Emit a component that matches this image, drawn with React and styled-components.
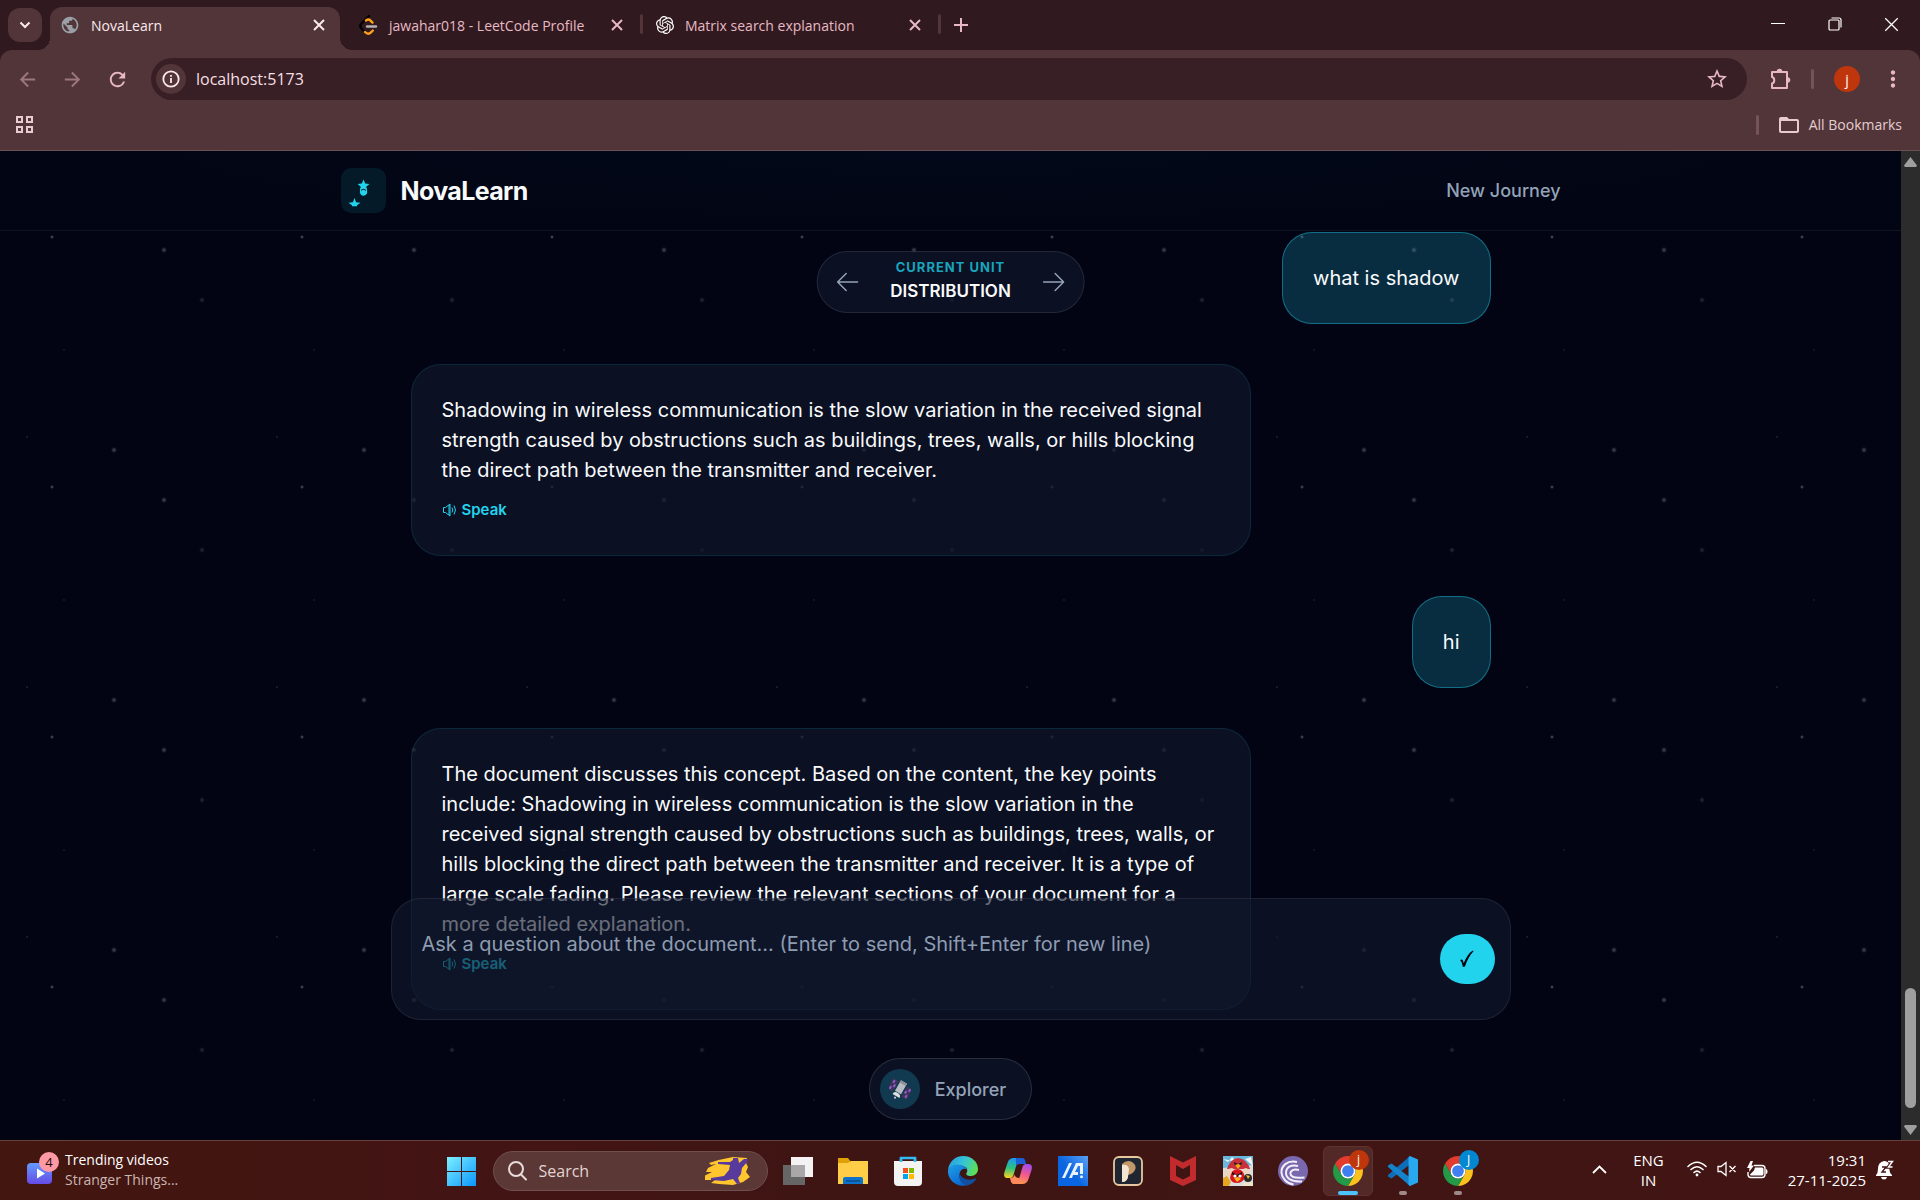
import { useState } from "react";
import styled, { createGlobalStyle, css } from "styled-components";
import { MdPublic, MdArrowBack, MdArrowForward, MdRefresh, MdStarOutline, MdFolderOpen, MdMoreVert } from "react-icons/md";
import { SiOpenai } from "react-icons/si";

const uiFont = '"Segoe UI", "Open Sans", "Noto Sans", sans-serif';

const GlobalStyle = createGlobalStyle`
  * {
    box-sizing: border-box;
  }
  body {
    margin: 0;
    background: #020414;
    font-family: Inter, sans-serif;
  }
  button {
    font: inherit;
    color: inherit;
    background: none;
    border: none;
    padding: 0;
    cursor: pointer;
  }
  svg {
    display: block;
    flex-shrink: 0;
  }
`;

const Desktop = styled.div`
  height: 100vh;
  display: flex;
  flex-direction: column;
  overflow: hidden;
`;

/* ---------- browser chrome ---------- */

const TabStrip = styled.div`
  display: flex;
  height: 50px;
  padding-left: 8px;
  background: #30191f;
  color: #e8b9c4;
  font-family: ${uiFont};
  font-size: 14px;
`;

const TabSearch = styled.button`
  width: 34px;
  height: 34px;
  margin: 8px 8px 0 0;
  border-radius: 12px;
  background: #513539;
  color: #fbe9ec;
  display: grid;
  place-items: center;
`;

const TabBox = styled.div`
  position: relative;
  display: flex;
  align-items: center;
  width: 290px;
  height: 43px;
  margin: 7px 8px 0 0;
  padding: 0 15px 7px 10px;
  border-radius: 12px 12px 0 0;

  ${({ $active }) => $active && css`
    background: #513539;
    color: #fbe9ec;

    &::before,
    &::after {
      content: "";
      position: absolute;
      bottom: 0;
      width: 12px;
      height: 12px;
    }
    &::before {
      left: -12px;
      background: radial-gradient(circle at 0 0, transparent 12px, #513539 12px);
    }
    &::after {
      right: -12px;
      background: radial-gradient(circle at 100% 0, transparent 12px, #513539 12px);
    }
  `}

  ${({ $divided }) => $divided && css`
    &::after {
      content: "";
      position: absolute;
      right: -5px;
      top: 7px;
      width: 3px;
      height: 20px;
      border-radius: 2px;
      background: #513539;
    }
  `}
`;

const TabTitle = styled.span`
  flex: 1;
  padding-left: 11px;
  white-space: nowrap;
`;

const TabClose = styled.button`
  width: 12px;
  height: 12px;
`;

const NewTab = styled.button`
  width: 34px;
  height: 36px;
  margin-top: 7px;
  display: grid;
  place-items: center;
`;

const WindowControls = styled.div`
  display: flex;
  margin-left: auto;
  color: #fff;
`;

const WindowButton = styled.button`
  width: 57px;
  height: 48px;
  display: grid;
  place-items: center;
`;

const ToolArea = styled.div`
  background: #30191f;
`;

const Toolbar = styled.div`
  display: flex;
  align-items: center;
  height: 58px;
  padding: 0 14px 0 16px;
  border-radius: 12px 12px 0 0;
  background: #513539;
  color: #e8b9c4;
`;

const NavButton = styled.button`
  width: 24px;
  height: 24px;
  margin-right: 21px;
  opacity: ${({ disabled }) => (disabled ? 0.5 : 1)};
`;

const AddressBar = styled.label`
  flex: 1;
  display: flex;
  align-items: center;
  height: 42px;
  margin-right: 22px;
  padding: 0 18px 0 5px;
  border-radius: 21px;
  background: #381f25;
`;

const SiteInfo = styled.span`
  width: 30px;
  height: 30px;
  border-radius: 50%;
  background: #513539;
  color: #fbe9ec;
  display: grid;
  place-items: center;
`;

const AddressInput = styled.input`
  flex: 1;
  margin-left: 8px;
  padding: 0 2px;
  border: none;
  outline: none;
  background: none;
  color: #f5dfe3;
  font: 16px ${uiFont};
`;

const Divider = styled.span`
  width: 3px;
  height: 20px;
  border-radius: 2px;
  background: #74545a;
`;

const ToolDivider = styled(Divider)`
  margin-left: 20px;
`;

const Profile = styled.button`
  width: 26px;
  height: 26px;
  margin: 0 20px;
  border-radius: 50%;
  background: #bf360c;
  color: #fff;
  font: 14px ${uiFont};
`;

const Bookmarks = styled.div`
  display: flex;
  align-items: center;
  justify-content: space-between;
  height: 43px;
  padding: 0 18px 9px 15px;
  background: #513539;
  border-bottom: 1px solid #6b5052;
  color: #e6ccd0;
  font: 14px ${uiFont};
`;

const BookmarkEnd = styled.div`
  display: flex;
  align-items: center;
  gap: 18px;
`;

const AllBookmarks = styled.button`
  display: flex;
  align-items: center;
  gap: 8px;
`;

/* ---------- page ---------- */

const Viewport = styled.div`
  flex: 1;
  min-height: 0;
  display: flex;
`;

const Page = styled.div`
  position: relative;
  flex: 1;
  min-width: 0;
  overflow: hidden;
  background-color: #020414;
  background-image:
    radial-gradient(1px 1px at 27px 36px, rgba(238, 238, 238, 0.3), transparent),
    radial-gradient(2px 2px at 52px 86px, rgba(255, 255, 255, 0.35), transparent),
    radial-gradient(1px 1px at 64px 199px, rgba(221, 221, 221, 0.25), transparent),
    radial-gradient(3px 3px at 114px 49px, rgba(255, 255, 255, 0.28), transparent),
    radial-gradient(3px 3px at 164px 99px, rgba(255, 255, 255, 0.28), transparent),
    radial-gradient(3px 3px at 202px 149px, rgba(221, 221, 221, 0.18), transparent);
  background-size: 250px 250px;
`;

const Header = styled.header`
  position: relative;
  height: 80px;
  background: radial-gradient(ellipse at 50% 0, #03091a, #020514 60%);
  border-bottom: 1px solid #11131f;
`;

const HeaderInner = styled.div`
  display: flex;
  align-items: center;
  justify-content: space-between;
  max-width: 1280px;
  height: 100%;
  margin: 0 auto;
  padding: 0 30px;
`;

const Brand = styled.a`
  display: flex;
  align-items: center;
  gap: 15px;
  color: #f8fafc;
  font-size: 25px;
  font-weight: 700;
  letter-spacing: -0.025em;
  text-decoration: none;
`;

const LogoBox = styled.span`
  width: 45px;
  height: 45px;
  border-radius: 10px;
  background: #051a28;
`;

const NewJourney = styled.button`
  color: #94a3b8;
  font-size: 18px;
  font-weight: 500;
`;

const UnitNav = styled.nav`
  position: absolute;
  top: 100px;
  left: 50%;
  transform: translateX(-50%);
  display: flex;
  align-items: center;
  gap: 28px;
  padding: 8px 15px;
  border: 1px solid rgba(255, 255, 255, 0.1);
  border-radius: 31px;
  background: rgba(17, 24, 44, 0.62);
  color: #94a3b8;
`;

const UnitButton = styled.button`
  width: 30px;
  height: 30px;
  display: grid;
  place-items: center;
`;

const UnitText = styled.div`
  display: flex;
  flex-direction: column;
  align-items: center;
  gap: 4px;
  white-space: nowrap;
`;

const UnitLabel = styled.div`
  color: #18a5bd;
  font-size: 13px;
  font-weight: 700;
  line-height: 15px;
  letter-spacing: 1px;
`;

const UnitName = styled.div`
  color: #f8fafc;
  font-size: 17px;
  font-weight: 600;
  line-height: 25px;
`;

const Feed = styled.main`
  display: flex;
  flex-direction: column;
  gap: 40px;
  max-width: 1080px;
  margin: 0 auto;
  padding-top: 1px;
`;

const Bubble = styled.article`
  max-width: 840px;
  padding: 30px;
  border-radius: 30px;
  color: #f8fafc;
  font-size: 20px;
  font-weight: 400;
  line-height: 30px;
  align-self: ${({ $mine }) => ($mine ? "flex-end" : "flex-start")};
  background: ${({ $mine }) => ($mine ? "rgba(42, 211, 238, 0.2)" : "rgba(17, 24, 44, 0.62)")};
  border: 1px solid ${({ $mine }) => ($mine ? "rgba(34, 211, 238, 0.4)" : "rgba(34, 211, 238, 0.12)")};
`;

const Speak = styled.button`
  display: flex;
  align-items: center;
  gap: 5px;
  height: 30px;
  margin-top: 10px;
  color: #22d3ee;
  font-size: 15px;
  font-weight: 600;
`;

const Dock = styled.div`
  position: absolute;
  left: 0;
  right: 0;
  bottom: 20px;
  display: flex;
  flex-direction: column;
  align-items: center;
  gap: 38px;
`;

const Composer = styled.form`
  display: flex;
  align-items: center;
  width: 100%;
  max-width: 1120px;
  padding: 15px;
  border: 1px solid rgba(255, 255, 255, 0.08);
  border-radius: 30px;
  background: rgba(17, 24, 44, 0.62);
`;

const Question = styled.textarea`
  flex: 1;
  display: block;
  height: 90px;
  padding: 15px;
  border: none;
  outline: none;
  resize: none;
  background: none;
  color: #f8fafc;
  font: 400 20px/30px Inter, sans-serif;

  &::placeholder {
    color: #8d9cb1;
    opacity: 1;
  }
`;

const Send = styled.button`
  width: 55px;
  height: 50px;
  border-radius: 25px;
  background: #22d3ee;
  color: #020414;
  display: grid;
  place-items: center;
`;

const ExplorerPill = styled.button`
  display: flex;
  align-items: center;
  gap: 15px;
  padding: 10px 25px 10px 10px;
  border: 1px solid rgba(255, 255, 255, 0.12);
  border-radius: 31px;
  background: #0b1122;
  color: #94a3b8;
  font-size: 18px;
  font-weight: 500;
`;

const ExplorerIcon = styled.span`
  width: 40px;
  height: 40px;
  border-radius: 50%;
  background: #113a50;
  display: grid;
  place-items: center;
`;

const ScrollBar = styled.div`
  width: 19px;
  padding: 6px 0 5px;
  background: #2c2c2c;
  display: flex;
  flex-direction: column;
  align-items: center;
`;

const ScrollThumb = styled.span`
  width: 11px;
  height: 120px;
  margin: auto 0 17px;
  border-radius: 6px;
  background: #9f9f9f;
`;

/* ---------- taskbar ---------- */

const Taskbar = styled.footer`
  display: flex;
  align-items: center;
  height: 60px;
  border-top: 1px solid #66403a;
  background: linear-gradient(90deg, #43160f, #431414 25%, #3e1513 45%, #421513);
  color: #fff;
  font: 14px/20px ${uiFont};
`;

const TaskSide = styled.div`
  flex: 1 1 0;
  display: flex;
  align-items: center;
  padding-bottom: 2px;
  white-space: nowrap;
`;

const Widget = styled.button`
  display: flex;
  align-items: center;
  gap: 4px;
  margin-left: 25px;
  text-align: left;
`;

const WidgetSub = styled.span`
  display: block;
  color: #cbb5b3;
`;

const TaskCenter = styled.div`
  display: flex;
  align-items: center;
  gap: 5px;
  margin-right: 2px;
`;

const SearchBox = styled.label`
  display: flex;
  align-items: center;
  width: 275px;
  height: 40px;
  margin-left: 2px;
  padding: 0 16px 0 14px;
  border: 1px solid #70504c;
  border-radius: 20px;
  background: #5b3735;
`;

const SearchInput = styled.input`
  flex: 1;
  min-width: 0;
  margin-left: 10px;
  padding: 0 2px;
  border: none;
  outline: none;
  background: none;
  font: 16px ${uiFont};

  &::placeholder {
    color: #e2d5d4;
    opacity: 1;
  }
`;

const TaskButton = styled.button`
  position: relative;
  width: 50px;
  height: 50px;
  border-radius: 6px;
  display: grid;
  place-items: center;
  border: 1px solid ${({ $active }) => ($active ? "#5c3331" : "transparent")};
  background: ${({ $active }) => ($active ? "#532927" : "none")};

  &::after {
    content: "";
    position: absolute;
    bottom: 0;
    height: 4px;
    border-radius: 2px;
    width: ${({ $active }) => ($active ? "20px" : "8px")};
    background: ${({ $active, $running }) => ($active ? "#4cc2ff" : $running ? "#a08a88" : "none")};
  }
`;

const ProfileBadge = styled.span`
  position: absolute;
  top: 3px;
  right: 3px;
  width: 20px;
  height: 20px;
  border-radius: 50%;
  background: ${({ $color }) => $color};
  color: #fff;
  font-size: 12px;
  line-height: 20px;
`;

const Tray = styled.div`
  display: flex;
  align-items: center;
  margin: 0 26px 0 auto;
  font-size: 15px;
`;

const Language = styled.button`
  margin: 0 23px 0 26px;
  text-align: center;
`;

const TrayIcons = styled.button`
  display: flex;
  gap: 10px;
`;

const Clock = styled.button`
  display: flex;
  align-items: center;
  gap: 10px;
  margin-left: 20px;
  text-align: right;
`;

/* ---------- drawings ---------- */

const CrossIcon = ({ size = 12, stroke = 2 }) => (
  <svg width={size} height={size} viewBox="0 0 12 12" fill="none" stroke="currentColor" strokeWidth={stroke}>
    <path d="M1 1l10 10M11 1L1 11" />
  </svg>
);

const LeetCodeIcon = () => (
  <svg width="20" height="20" viewBox="0 0 20 20" fill="none" strokeWidth="2.4" strokeLinecap="round">
    <path d="M11 1L3.500 8.500c-1.500 1.600-1.500 3.400 0 5l3 3.300" stroke="#000" />
    <path d="M8 5.500c1.500-1.200 3.200-1.200 4.500.1l2 2" stroke="#ffa116" />
    <path d="M7 17c2 2 4.300 2 6 .3l1.800-1.800" stroke="#ffa116" />
    <path d="M9 11.500h9" stroke="#b3b3b3" />
  </svg>
);

const InfoIcon = () => (
  <svg width="18" height="18" viewBox="0 0 18 18" fill="none" stroke="currentColor" strokeWidth="1.800">
    <circle cx="9" cy="9" r="7.700" />
    <path d="M9 8v5M9 5v1.800" />
  </svg>
);

const PuzzleIcon = () => (
  <svg width="22" height="22" viewBox="0 0 22 22" fill="none" stroke="currentColor" strokeWidth="2" strokeLinejoin="round">
    <path d="M3 4h15v16H3v-4.500c3-.5 3-6 0-6.500z" />
    <path d="M8 4a2.500 2.500 0 0 1 5 0zM18 9.500a2.500 2.500 0 0 1 0 5z" fill="currentColor" stroke="none" />
    <path d="M8.500 3.500a2 2 0 0 1 4 0M18.500 10a2 2 0 0 1 0 4" strokeWidth="1.500" />
  </svg>
);

const AppsIcon = () => (
  <svg width="19" height="19" viewBox="0 0 19 19" fill="none" stroke="currentColor" strokeWidth="2">
    <path d="M2 2h5v5H2zM12 2h5v5h-5zM2 12h5v5H2zM12 12h5v5h-5z" />
  </svg>
);

const NovaLogo = () => (
  <svg width="45" height="45" viewBox="0 0 45 45" fill="#22d3ee">
    <path d="M22.500 11.500l1.700 4 4.300.4-3.300 2.900 1 4.200-3.700-2.200-3.700 2.200 1-4.200-3.300-2.900 4.300-.4z" />
    <path d="M19 20.500h7v2.500a3.500 3.500 0 0 1-7 2z" />
    <path d="M20 22.500a2.800 2 0 0 1 5 0" fill="none" stroke="#051a28" />
    <path d="M13.500 30l1.600 4.200 4.400.5-3.500 2.600v.9h-5v-.9l-3.500-2.600 4.400-.5z" />
  </svg>
);

const LongArrow = ({ flip }) => (
  <svg width="22" height="20" viewBox="0 0 22 20" fill="none" stroke="currentColor" strokeWidth="1.500" strokeLinecap="round" strokeLinejoin="round">
    <path d={flip ? "M1 10h20M12.500 1.500L21 10l-8.500 8.500" : "M21 10H1M9.500 1.500L1 10l8.500 8.500"} />
  </svg>
);

const SpeakerIcon = () => (
  <svg width="15" height="14" viewBox="0 0 15 14" fill="none" stroke="currentColor" strokeWidth="1">
    <path d="M1.500 4.500h2L8 1v12L3.500 9.500h-2zM7 2v10M10 4.500q1.500 2.500 0 5M12 2.500q3 4.500 0 9" />
  </svg>
);

const CheckIcon = () => (
  <svg width="16" height="18" viewBox="0 0 16 18" fill="currentColor">
    <path d="M1.200 10.500c1-1.600 2.800-1.200 3.500 2.800C6.800 8 9.500 3.500 13.400.8l1.300.3C10.800 5 8 10.500 6 16.600l-2.200.4C3.400 14 2.700 11.600 1.200 10.500z" />
  </svg>
);

const SatelliteIcon = () => (
  <svg width="22" height="22" viewBox="0 0 22 22">
    <g transform="rotate(30 11 11)">
      <path d="M0 5h6v12H0zM16 5h6v12h-6z" fill="#3d3553" />
      <path d="M1 6h2v3H1zM3.500 9.500h2v3h-2zM1 13h2v3H1zM19 6h2v3h-2zM16.500 9.500h2v3h-2zM19 13h2v3h-2z" fill="#9a55d6" />
      <path d="M7.500 3h7v12h-7z" fill="#b9bcc4" />
      <path d="M7.500 3h7v2.500h-7z" fill="#8d8f99" />
      <path d="M7 19a4 3.500 0 0 1 8 0z" fill="#e0dfe4" />
      <circle cx="11" cy="21" r="1" fill="#d6c6ef" />
    </g>
  </svg>
);

const WidgetIcon = () => (
  <svg width="36" height="36" viewBox="0 0 36 36">
    <defs>
      <linearGradient id="vid" x1="0" y1="0" x2="0" y2="1">
        <stop offset="0" stopColor="#639bff" />
        <stop offset="1" stopColor="#664be6" />
      </linearGradient>
    </defs>
    <rect x="2" y="11" width="25" height="21" rx="4" fill="url(#vid)" />
    <path d="M12 16.500v10l8-5z" fill="#fff" />
    <circle cx="24" cy="10" r="10" fill="#ff99a4" />
    <text x="24" y="15" textAnchor="middle" fontSize="13" fontFamily="Open Sans" fill="#1b0a0a">4</text>
  </svg>
);

const WindowsIcon = () => (
  <svg width="30" height="30" viewBox="0 0 30 30">
    <defs>
      <linearGradient id="win" x1="0" y1="0" x2="1" y2="1">
        <stop offset="0" stopColor="#7df0ff" />
        <stop offset="1" stopColor="#0a95ff" />
      </linearGradient>
    </defs>
    <path d="M1 1h14v14H1zM16 1h14v14H16zM1 16h14v14H1zM16 16h14v14H16z" fill="url(#win)" />
  </svg>
);

const KungFuArt = () => (
  <svg width="46" height="30" viewBox="0 0 46 30">
    <path d="M4 7Q16 3 28 1l14 1-1 5 2 4-2 5 4 5-7 5-10 3-14-1-8-1 4-3-12 0 1-4 8-4-6 0 2-4 8-4-5 1z" fill="#ffc62e" />
    <path d="M28 2h5l1 5 5-4 4 0-1 3-5 6-1 6-3 4 2 5-3 1-4-5-9 2-13-1 0-2 13-2 5-6 1-5-12-1 0-2 12 0 3-2z" fill="#573a9b" />
  </svg>
);

const TaskViewIcon = () => (
  <svg width="30" height="30" viewBox="0 0 30 30">
    <path d="M8 1h22v20H8z" fill="#f4f2f2" />
    <path d="M0 9h22v20H0z" fill="#666" />
    <path d="M8 9h14v12H8z" fill="#a9a7a7" />
  </svg>
);

const FolderIcon = () => (
  <svg width="30" height="28" viewBox="0 0 30 28">
    <path d="M0 1h10l3 4h17v22H0z" fill="#e0a106" />
    <path d="M0 6h10l3-2h17v23H0z" fill="#ffce46" />
    <path d="M5 27v-5q0-2 2-2h16q2 0 2 2v5z" fill="#0d72c9" />
    <path d="M8 24h14" stroke="#0a4d92" strokeWidth="1.500" />
  </svg>
);

const StoreIcon = () => (
  <svg width="30" height="30" viewBox="0 0 30 30">
    <path d="M8 8V2h14v6" fill="none" stroke="#35b9f1" strokeWidth="2.500" />
    <path d="M1 5h28v21q0 4-4 4H5q-4 0-4-4z" fill="#f3f3f3" />
    <path d="M8 6V2M22 6V2" stroke="#35b9f1" strokeWidth="2.500" />
    <path d="M10 12h5v5h-5z" fill="#f25022" />
    <path d="M16 12h5v5h-5z" fill="#7fba00" />
    <path d="M10 18h5v5h-5z" fill="#00a4ef" />
    <path d="M16 18h5v5h-5z" fill="#ffb900" />
  </svg>
);

const EdgeIcon = () => (
  <svg width="30" height="30" viewBox="0 0 30 30">
    <defs>
      <linearGradient id="edgeTop" x1="0" y1="0.300" x2="1" y2="0.600">
        <stop offset="0" stopColor="#2a9fe0" />
        <stop offset="0.500" stopColor="#36c5d6" />
        <stop offset="1" stopColor="#5fe04e" />
      </linearGradient>
      <linearGradient id="edgeSide" x1="0" y1="0" x2="0.600" y2="1">
        <stop offset="0" stopColor="#1fa0e8" />
        <stop offset="1" stopColor="#0b66cf" />
      </linearGradient>
    </defs>
    <path d="M0 14C1 6 7 0 15 0c9 0 15 6 15 13 0 4-3 7-7 7-4 0-5.500-1.500-4.500-3 1-1.500 1-3 .3-4.500C17 9 5 7 0 14z" fill="url(#edgeTop)" />
    <path d="M0 14c2-4 6-6 10-5.500 5 .5 8 2.500 9 5-3-2-7 0-7.500 4.500-.5 5 3 11 9 11C9 32.500-1 24 0 14z" fill="url(#edgeSide)" />
    <path d="M11.500 17c-1.500 4.500 1.500 12 8 12.300 3.500-.8 6.500-2.800 8.500-6 .4-.7-.2-1-.8-.7-6 2.700-14 .4-15.700-5.600z" fill="#114f9f" />
  </svg>
);

const CopilotIcon = () => (
  <svg width="30" height="28" viewBox="0 0 30 28">
    <defs>
      <linearGradient id="copA" x1="0.300" y1="0" x2="0.200" y2="1">
        <stop offset="0" stopColor="#1b9bf0" />
        <stop offset="0.500" stopColor="#2fc27c" />
        <stop offset="1" stopColor="#ffd21f" />
      </linearGradient>
      <linearGradient id="copB" x1="0.700" y1="0" x2="0.400" y2="1">
        <stop offset="0" stopColor="#a04bf0" />
        <stop offset="0.500" stopColor="#f0588e" />
        <stop offset="1" stopColor="#ff9a4a" />
      </linearGradient>
    </defs>
    <path d="M19 1h-8C7.500 1 5.500 2.500 4.500 6l-3 9c-1.200 4 0 6 3.500 6h2c2 0 3-1.500 3.600-3.500L14 6c.8-3 2-5 5-5z" fill="url(#copA)" />
    <path d="M13 1h6c2.500 0 3 2 3.500 4l.5 2h-5c-2 0-3.500 0-4.500 2C13 6 12.500 3 13 1z" fill="#1e5fd8" />
    <path d="M11 27h8c3.500 0 5.500-1.500 6.500-5l3-9c1.200-4 0-6-3.500-6h-2c-2 0-3 1.500-3.600 3.500L16 22c-.8 3-2 5-5 5z" fill="url(#copB)" />
    <path d="M17 27h-6c-2.500 0-3-2-3.500-4L7 21c3 0 4-1.500 4.500-3.500.5 2 2 3.500 4.500 3.500 1.200 2 1.500 4 1 6z" fill="#ff8a5b" />
  </svg>
);

const MyAsusIcon = () => (
  <svg width="30" height="30" viewBox="0 0 30 30">
    <defs>
      <linearGradient id="asus" x1="0.400" y1="0.500" x2="1" y2="0">
        <stop offset="0" stopColor="#0a66e0" />
        <stop offset="1" stopColor="#5ba0f5" />
      </linearGradient>
    </defs>
    <path d="M0 0h30v30H0z" fill="url(#asus)" />
    <path d="M4 22l7-15h3L7 22z" fill="#e9f3ff" />
    <path d="M11 22l7-15h7v11h-3v-8h-2l-3 6h3v3h-5l-1 3z" fill="#e9f3ff" />
    <circle cx="23.500" cy="20.800" r="1.500" fill="#e9f3ff" />
  </svg>
);

const PeachIcon = () => (
  <svg width="30" height="30" viewBox="0 0 30 30">
    <rect x="1" y="1" width="28" height="28" rx="5" fill="#1f2632" stroke="#e6c7a0" strokeWidth="1.800" />
    <path d="M9 8q5-5 10-2 5 3 3 8-2 4-7 5 0 6-5 7z" fill="#c39767" />
    <path d="M9 9q6-1 7 4l-1 8q-1 5-6 5z" fill="#f3e5d2" />
  </svg>
);

const McAfeeIcon = () => (
  <svg width="28" height="30" viewBox="0 0 28 30">
    <path d="M1 0l13 6.500L27 0v24L14 30 1 24zM7 9v11l7 3.500 7-3.500V9l-7 4z" fill="#c22b2e" fillRule="evenodd" />
  </svg>
);

const BirdsIcon = () => (
  <svg width="30" height="30" viewBox="0 0 30 30">
    <path d="M0 0h30v30H0z" fill="#d8dde0" />
    <path d="M0 0h30v9L0 12z" fill="#67b8dc" />
    <path d="M0 3l5 3 4-5 5 5zM22 3l6-2 2 9z" fill="#f3f6f5" />
    <path d="M4 13Q7 3 15 2q9 1 12 11z" fill="#c9303c" />
    <path d="M11 6l4 2 4-2-1 4h-6z" fill="#1d1312" />
    <path d="M12 9l3-1 3 1-3 4z" fill="#f5a71c" />
    <path d="M1 14l8-2 5 3-6 6-7-1zM17 14l6-2 6 3-5 4z" fill="#ecd6c0" />
    <path d="M7 22q1-9 8-9 6 1 7 9-3 5-8 5-6 0-7-5z" fill="#d8161d" />
    <path d="M9 16l5 3 5-3v2l-5 3-5-3z" fill="#200c0c" />
    <circle cx="12" cy="20" r="1.600" fill="#fff" />
    <circle cx="17" cy="20" r="1.600" fill="#fff" />
    <path d="M11 22l4-1 3 2-4 3z" fill="#f9b41b" />
    <path d="M0 22l4-2 4 6-2 4H0z" fill="#e5a621" />
    <circle cx="25" cy="22" r="4" fill="#2d2a2a" />
    <path d="M23 19l4 1-2 3z" fill="#f3c028" />
    <path d="M20 27l9-1 1 4H20z" fill="#f0e3c8" />
  </svg>
);

const BitTorrentIcon = () => (
  <svg width="30" height="30" viewBox="0 0 30 30">
    <circle cx="15" cy="15" r="15" fill="#7a68ae" />
    <g fill="none" stroke="#f1eef8" strokeWidth="2">
      <path d="M19 6C9 4 3 10 3.500 17c.5 5 5 10.500 12 11.500" />
      <path d="M20 10c-7-2-12 1.500-12 7 0 5 5 9 16 8.500" />
      <path d="M21 14c-5-1.500-9 .5-8.500 4 .5 3 5 4.500 14 3.500" />
    </g>
  </svg>
);

const ChromeIcon = () => (
  <svg width="30" height="30" viewBox="0 0 48 48">
    <path d="M3.220 12A24 24 0 0 1 44.780 12H24A12 12 0 0 0 13.600 30z" fill="#e33b2e" />
    <path d="M44.780 12A24 24 0 0 1 24 48l10.400-18A12 12 0 0 0 24 12z" fill="#fcc21b" />
    <path d="M24 48A24 24 0 0 1 3.220 12l10.400 18a12 12 0 0 0 20.800 0z" fill="#229a48" />
    <circle cx="24" cy="24" r="12" fill="#fff" />
    <circle cx="24" cy="24" r="9.400" fill="#3f7ff0" />
  </svg>
);

const VsCodeIcon = () => (
  <svg width="30" height="30" viewBox="0 0 30 30">
    <path d="M22 0v8.500L3.500 22.500 0 20.500v-1.500z" fill="#0d6db8" />
    <path d="M22 30v-8.500L3.500 7.500 0 9.500V11z" fill="#1583cb" />
    <path d="M22 0l8 3.500v23L22 30q-1.500-.5-1.500-2V2q0-1.500 1.500-2z" fill="#28a8ef" />
  </svg>
);

const TraySymbols = () => (
  <>
    <svg width="20" height="16" viewBox="0 0 20 16" fill="none" stroke="#fff" strokeWidth="1.600" strokeLinecap="round">
      <path d="M1 5.500q9-8.500 18 0M4 8.500q6-5.500 12 0M7 11.500q3-2.800 6 0" />
      <circle cx="10" cy="14" r="1.400" fill="#fff" stroke="none" />
    </svg>
    <svg width="20" height="16" viewBox="0 0 20 16" fill="none" stroke="#fff" strokeWidth="1.300">
      <path d="M1 5.500h3L9 1.500v13l-5-4H1zM12.500 5l6 6M18.500 5l-6 6" />
    </svg>
    <svg width="21" height="18" viewBox="0 0 21 18">
      <path d="M7 4.500h8q3 0 3 3v6q0 3-3 3H4q-3 0-3-3V11" fill="none" stroke="#fff" strokeWidth="1.400" />
      <path d="M8 6.500h7q1.500 0 1.500 1.500v5q0 1.500-1.500 1.500H4q-1 0-1-1l4-4z" fill="#fff" />
      <path d="M19 8q1.500 0 1.500 2.500T19 13z" fill="#fff" />
      <path d="M3.500 0L0 7h2.500L2 11l5-6.500H4.500L6 0z" fill="#fff" />
    </svg>
  </>
);

const BellIcon = () => (
  <svg width="18" height="20" viewBox="0 0 18 20">
    <path d="M8 1q4 0 5.500 3.500V10q0 3 2.500 5v1H0v-1q2-2 2-6 0-7 6-8zM5 17h6q-.5 2.500-3 2.500T5 17z" fill="#fff" />
    <path d="M6 7h4l-4 5h4" fill="none" stroke="#421513" strokeWidth="1.400" />
    <path d="M12 1.500h4.500L12.500 7h4" fill="none" stroke="#421513" strokeWidth="3.500" />
    <path d="M12 1.500h4.500L12.500 7h4" fill="none" stroke="#fff" strokeWidth="1.400" />
  </svg>
);

const tabs = [
  { title: "NovaLearn", icon: <MdPublic size={20} color="#9aa0a6" />, active: true },
  { title: "jawahar018 - LeetCode Profile", icon: <LeetCodeIcon />, divided: true },
  { title: "Matrix search explanation", icon: <SiOpenai size={18} color="#fff" />, divided: true },
];

const messages = [
  { mine: true, text: "what is shadow" },
  {
    text: "Shadowing in wireless communication is the slow variation in the received signal strength caused by obstructions such as buildings, trees, walls, or hills blocking the direct path between the transmitter and receiver.",
  },
  { mine: true, text: "hi" },
  {
    text: "The document discusses this concept. Based on the content, the key points include: Shadowing in wireless communication is the slow variation in the received signal strength caused by obstructions such as buildings, trees, walls, or hills blocking the direct path between the transmitter and receiver. It is a type of large scale fading. Please review the relevant sections of your document for a more detailed explanation.",
  },
];

const taskApps = [
  { name: "Task view", icon: <TaskViewIcon /> },
  { name: "File Explorer", icon: <FolderIcon /> },
  { name: "Microsoft Store", icon: <StoreIcon /> },
  { name: "Edge", icon: <EdgeIcon /> },
  { name: "Copilot", icon: <CopilotIcon /> },
  { name: "MyASUS", icon: <MyAsusIcon /> },
  { name: "Player", icon: <PeachIcon /> },
  { name: "McAfee", icon: <McAfeeIcon /> },
  { name: "Angry Birds", icon: <BirdsIcon /> },
  { name: "BitTorrent", icon: <BitTorrentIcon /> },
  { name: "Chrome", icon: <ChromeIcon />, active: true, badge: "j", color: "#bf360c" },
  { name: "VS Code", icon: <VsCodeIcon />, running: true },
  { name: "Chrome second profile", icon: <ChromeIcon />, running: true, badge: "J", color: "#0288d1" },
];

function BrowserChrome() {
  return (
    <>
      <TabStrip>
        <TabSearch aria-label="Search tabs">
          <svg width="12" height="8" viewBox="0 0 12 8" fill="none" stroke="currentColor" strokeWidth="2">
            <path d="M1.500 1.500L6 6l4.500-4.500" />
          </svg>
        </TabSearch>
        {tabs.map((tab) => (
          <TabBox key={tab.title} $active={tab.active} $divided={tab.divided}>
            {tab.icon}
            <TabTitle>{tab.title}</TabTitle>
            <TabClose aria-label={`Close ${tab.title}`}>
              <CrossIcon />
            </TabClose>
          </TabBox>
        ))}
        <NewTab aria-label="New tab">
          <svg width="14" height="14" viewBox="0 0 14 14" stroke="currentColor" strokeWidth="2">
            <path d="M7 0v14M0 7h14" />
          </svg>
        </NewTab>
        <WindowControls>
          <WindowButton aria-label="Minimize">
            <svg width="14" height="2" viewBox="0 0 14 2">
              <path d="M0 0h14v1H0z" fill="#fff" />
            </svg>
          </WindowButton>
          <WindowButton aria-label="Restore">
            <svg width="14" height="14" viewBox="0 0 14 14" fill="none" stroke="currentColor" strokeWidth="1.200">
              <rect x="1" y="3" width="10" height="10" rx="1" />
              <path d="M3.500 1H11q2 0 2 2v7.500" />
            </svg>
          </WindowButton>
          <WindowButton aria-label="Close window">
            <CrossIcon size={15} stroke={1} />
          </WindowButton>
        </WindowControls>
      </TabStrip>
      <ToolArea>
        <Toolbar>
          <NavButton aria-label="Back" disabled><MdArrowBack size={23} /></NavButton>
          <NavButton aria-label="Forward" disabled><MdArrowForward size={23} /></NavButton>
          <NavButton aria-label="Reload"><MdRefresh size={23} /></NavButton>
          <AddressBar>
            <SiteInfo><InfoIcon /></SiteInfo>
            <AddressInput aria-label="Address" defaultValue="localhost:5173" />
            <MdStarOutline size={24} />
          </AddressBar>
          <PuzzleIcon />
          <ToolDivider />
          <Profile>j</Profile>
          <MdMoreVert size={26} />
        </Toolbar>
        <Bookmarks>
          <AppsIcon />
          <BookmarkEnd>
            <Divider />
            <AllBookmarks>
              <MdFolderOpen size={24} />
              All Bookmarks
            </AllBookmarks>
          </BookmarkEnd>
        </Bookmarks>
      </ToolArea>
    </>
  );
}

function NovaLearn() {
  const [question, setQuestion] = useState("");

  return (
    <Page>
      <Header>
        <HeaderInner>
          <Brand href="#home">
            <LogoBox><NovaLogo /></LogoBox>
            NovaLearn
          </Brand>
          <NewJourney>New Journey</NewJourney>
        </HeaderInner>
      </Header>
      <Feed>
        {messages.map((message) => (
          <Bubble key={message.text} $mine={message.mine}>
            {message.text}
            {!message.mine && (
              <Speak>
                <SpeakerIcon />
                Speak
              </Speak>
            )}
          </Bubble>
        ))}
      </Feed>
      <UnitNav>
        <UnitButton aria-label="Previous unit"><LongArrow /></UnitButton>
        <UnitText>
          <UnitLabel>CURRENT UNIT</UnitLabel>
          <UnitName>DISTRIBUTION</UnitName>
        </UnitText>
        <UnitButton aria-label="Next unit"><LongArrow flip /></UnitButton>
      </UnitNav>
      <Dock>
        <Composer onSubmit={(e) => e.preventDefault()}>
          <Question
            aria-label="Question"
            placeholder="Ask a question about the document... (Enter to send, Shift+Enter for new line)"
            value={question}
            onChange={(e) => setQuestion(e.target.value)}
          />
          <Send aria-label="Send"><CheckIcon /></Send>
        </Composer>
        <ExplorerPill>
          <ExplorerIcon><SatelliteIcon /></ExplorerIcon>
          Explorer
        </ExplorerPill>
      </Dock>
    </Page>
  );
}

function WindowsTaskbar() {
  return (
    <Taskbar>
      <TaskSide>
        <Widget>
          <WidgetIcon />
          <span>
            Trending videos
            <WidgetSub>Stranger Things...</WidgetSub>
          </span>
        </Widget>
      </TaskSide>
      <TaskCenter>
        <TaskButton aria-label="Start"><WindowsIcon /></TaskButton>
        <SearchBox>
          <svg width="19" height="20" viewBox="0 0 19 20" fill="none" stroke="#e8dcdb" strokeWidth="2" strokeLinecap="round">
            <circle cx="8" cy="8" r="7" />
            <path d="M13 13.500l5 5" />
          </svg>
          <SearchInput aria-label="Search" placeholder="Search" />
          <KungFuArt />
        </SearchBox>
        {taskApps.map((app) => (
          <TaskButton key={app.name} aria-label={app.name} $active={app.active} $running={app.running}>
            {app.icon}
            {app.badge && <ProfileBadge $color={app.color}>{app.badge}</ProfileBadge>}
          </TaskButton>
        ))}
      </TaskCenter>
      <TaskSide>
        <Tray>
          <svg width="15" height="9" viewBox="0 0 15 9" fill="none" stroke="#fff" strokeWidth="1.800">
            <path d="M1 8l6.500-6.500L14 8" />
          </svg>
          <Language>ENG<br />IN</Language>
          <TrayIcons aria-label="Network, volume and battery"><TraySymbols /></TrayIcons>
          <Clock>
            <span>19:31<br />27-11-2025</span>
            <BellIcon />
          </Clock>
        </Tray>
      </TaskSide>
    </Taskbar>
  );
}

export default function App() {
  return (
    <Desktop>
      <GlobalStyle />
      <BrowserChrome />
      <Viewport>
        <NovaLearn />
        <ScrollBar>
          <svg width="13" height="10" viewBox="0 0 13 10"><path d="M6.500 0L13 8.500 12 10H1L0 8.500z" fill="#9f9f9f" /></svg>
          <ScrollThumb />
          <svg width="13" height="10" viewBox="0 0 13 10"><path d="M6.500 10L13 1.500 12 0H1L0 1.500z" fill="#9f9f9f" /></svg>
        </ScrollBar>
      </Viewport>
      <WindowsTaskbar />
    </Desktop>
  );
}
